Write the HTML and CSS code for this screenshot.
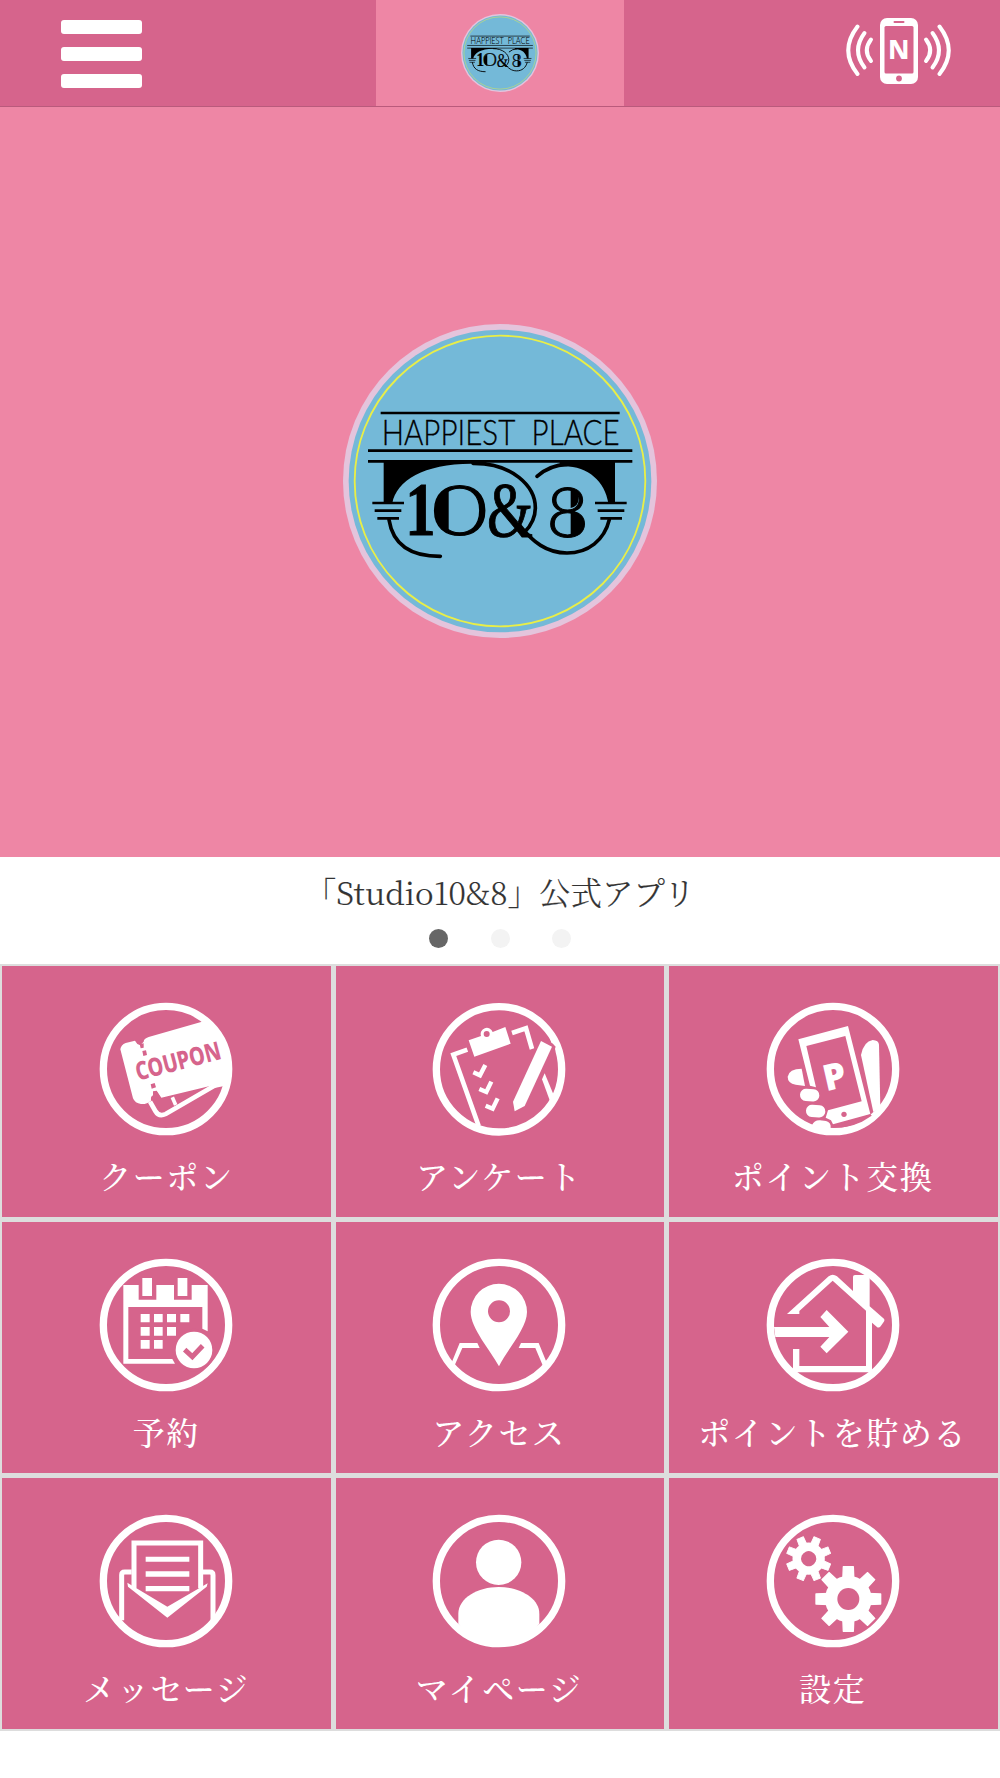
FILE: index.html
```html
<!DOCTYPE html>
<html lang="ja">

<head>
    <meta charset="UTF-8">
    <title>Studio10&amp;8</title>
    <meta name="viewport" content="width=device-width, initial-scale=1.0">
    <link rel="stylesheet" href="styles.css">
</head>

<body>
    <header class="header">
        <button class="menu-btn" type="button" aria-label="メニュー">
            <span></span>
            <span></span>
            <span></span>
        </button>
        <div class="header-logo">
            <svg class="logo-small" viewBox="40 41 942 942"><use href="#logo" /></svg>
        </div>
        <button class="nfc-btn" type="button" aria-label="NFC">
            <svg width="108" height="70" viewBox="845 16 108 70">
                <rect x="880" y="18" width="38" height="66" rx="7" fill="#fff" />
                <rect class="cut" x="884.5" y="26" width="29" height="47.500" rx="1.500" />
                <rect class="cut" x="893.500" y="21" width="11" height="2" rx="1" />
                <circle class="cut" cx="899" cy="78.500" r="2.900" />
                <text class="nfc-text" x="888" y="59" textLength="21.500" lengthAdjust="spacingAndGlyphs">N</text>
                <g id="waves" fill="none" stroke="#fff" stroke-width="4" stroke-linecap="round">
                    <path d="M926 39.500Q934.500 50.500 926 61" />
                    <path d="M932.500 33Q945.500 50.500 932.500 67.500" />
                    <path d="M939.500 26.500Q958 50.500 939.500 74" />
                </g>
                <use href="#waves" transform="translate(1797 0) scale(-1 1)" />
            </svg>
        </button>
    </header>

    <main>
        <section class="hero">
            <svg class="logo" viewBox="40 41 942 942">
                <g id="logo">
                    <circle cx="511" cy="512" r="471" fill="#e4c4dc" />
                    <circle cx="511" cy="512" r="454" fill="#74b9d8" />
                    <circle class="logo-ring" cx="511" cy="512" r="436" />
                    <g fill="none" stroke="#000" stroke-width="8">
                        <path d="M153 308H870M115 421H908M115 453H908" />
                        <path d="M128 578H223M135 601H215M143 624H208M796 578H891M804 601H884M812 624H877" />
                    </g>
                    <text class="logo-name" x="156" y="403" textLength="714" lengthAdjust="spacingAndGlyphs">HAPPIEST PLACE</text>
                    <!-- pillars and arches -->
                    <path d="M162 453H470V462C300 450 202 505 188 578H162Z" />
                    <path d="M690 453H856V578H836C825 510 770 462 690 468Z" />
                    <!-- swirls -->
                    <g fill="none" stroke="#000" stroke-width="11" stroke-linecap="round">
                        <path d="M430 459C548 458 617 528 617 592C617 622 606 644 585 665" />
                        <path d="M622 498Q660 464 712 462" />
                        <path d="M178 628C190 705 245 738 332 738" />
                        <path d="M570 645C610 695 650 728 712 728C775 728 824 690 839 628" />
                    </g>
                    <text class="logo-num one" x="227" y="674" textLength="91" lengthAdjust="spacingAndGlyphs">1</text>
                    <path d="M357 531Q318 550 318 599T357 667Z" />
                    <text class="logo-num" x="304" y="673" textLength="172" lengthAdjust="spacingAndGlyphs">0</text>
                    <text class="logo-num amp" x="472" y="678" textLength="138" lengthAdjust="spacingAndGlyphs">&amp;</text>
                    <path d="M723 533Q747 538 747 563T723 593V600Q755 606 755 639T723 675Z" />
                    <text class="logo-num" x="650" y="681" textLength="128" lengthAdjust="spacingAndGlyphs">8</text>
                </g>
            </svg>
        </section>

        <section class="caption">
            <p>「Studio10&amp;8」公式アプリ</p>
            <div class="dots">
                <span class="dot active"></span>
                <span class="dot"></span>
                <span class="dot"></span>
            </div>
        </section>

        <nav class="menu">
            <a class="menu-item">
                <svg class="icon" viewBox="56 66 402 402">
                    <circle class="ring" cx="257" cy="267" r="188" />
                    <path d="M120 208Q122 194 136 189L164 182L171 192L180 196L190 185Q190 176 205 171L370 124Q440 165 450 250L432 318L243 356L229 334L222 350Q210 345 212 362Q200 373 182 372Q164 370 158 355Z" />
                    <path class="cut" d="M178 193L190 190V203L181 205ZM186 213L197 211L200 225L189 228ZM211 313L223 309L227 322L214 326ZM218 334L229 332L243 353L414 312L401 318L262 385Q246 397 237 383L218 368Q208 350 218 346Z" />
                    <path class="line" stroke-width="11" d="M276 352L286 375" />
                    <path class="line" stroke-width="14" d="M209 365L225 393Q236 412 256 402L420 307" />
                    <text class="coupon" transform="translate(173 302) rotate(-14.500)" textLength="262" lengthAdjust="spacingAndGlyphs">COUPON</text>
                </svg>
                <span class="label">クーポン</span>
            </a>
            <a class="menu-item">
                <svg class="icon" viewBox="97 66 402 402">
                    <circle class="ring" cx="298" cy="268" r="188" />
                    <path d="M207 181L244 168A18 18 0 0 1 279 156L317 141L333 191L224 230Z" />
                    <circle class="cut" cx="261" cy="162" r="9" />
                    <path class="line" stroke-width="14" d="M203 209L161 224L237 438" />
                    <path class="line" stroke-width="14" d="M337 159L379 145L397 207" />
                    <path class="line" stroke-width="13" d="M221 277L241 286L257 255M239 327L260 336L275 305M258 377L279 386L294 355" />
                    <path class="cut" d="M400 211L428 176L447 178L468 200L467 214L431 292L427 303L400 290Z" />
                    <path d="M424 183L457 200L375 378L345 394L340 365Z" />
                    <path d="M450 172L481 190L471 216L466 207L471 195L455 188Z" />
                    <path d="M435 280L463 347L452 366L427 298Z" />
                </svg>
                <span class="label">アンケート</span>
            </a>
            <a class="menu-item">
                <svg class="icon" viewBox="136 66 402 402">
                    <circle class="ring" cx="337" cy="267" r="188" />
                    <path d="M233 178L382 138L449 402L337 433L331 421L315 413L322 391L423 364L374 168L257 198L286 322L268 317Z" />
                    <circle class="cut" cx="370" cy="403" r="8" />
                    <path d="M243 266L253 318L225 314Q201 310 201 290Q205 266 243 266Z" />
                    <rect x="238" y="327" width="58" height="37" rx="18" transform="rotate(4 267 346)" />
                    <rect x="256" y="375" width="58" height="37" rx="18" transform="rotate(4 285 393)" />
                    <path d="M274 436Q281 420 298 421L316 423Q332 428 330 444L360 442V460H310Z" />
                    <path class="cut" d="M330 444L450 403L453 407L424 425Q380 445 330 444Z" />
                    <path d="M421 225Q429 184 456 180Q474 181 475 194L479 382L458 396Z" />
                    <text class="point" transform="translate(317 334) rotate(-13)">P</text>
                </svg>
                <span class="label">ポイント交換</span>
            </a>
            <a class="menu-item">
                <svg class="icon" viewBox="56 54 402 402">
                    <circle class="ring" cx="257" cy="255" r="188" />
                    <path d="M129 135H175V179H228V135H281V179H334V135H382V274L366 266V201H144V357H276L284 371H129Z" />
                    <path d="M186 114H215V168H186ZM292 114H321V168H292Z" />
                    <path d="M181 222H208V247H181ZM221 222H247V247H221ZM260 222H287V247H260ZM300 222H327V247H300ZM181 261H208V287H181ZM221 261H247V287H221ZM260 261H287V287H260ZM181 300H208V326H181ZM221 300H247V326H221Z" />
                    <circle class="cut" cx="341" cy="330" r="64" />
                    <circle cx="341" cy="330" r="55" />
                    <path fill="none" stroke="#d6648c" stroke-width="15" d="M313 329L336 350L367 317" />
                </svg>
                <span class="label">予約</span>
            </a>
            <a class="menu-item">
                <svg class="icon" viewBox="95 54 402 402">
                    <circle class="ring" cx="296" cy="255" r="188" />
                    <path fill-rule="evenodd" d="M296 379C270 330 211 265 211 216A84.500 84.500 0 0 1 380 216C380 265 320 330 296 379ZM296 181A33 33 0 1 0 296 247A33 33 0 1 0 296 181Z" />
                    <path d="M155 365L178 309H231L238 324H186L162 378ZM438 365L415 309H362L355 324H405L428 378Z" />
                </svg>
                <span class="label">アクセス</span>
            </a>
            <a class="menu-item">
                <svg class="icon" viewBox="226 54 402 402">
                    <circle class="ring" cx="427" cy="255" r="188" />
                    <path d="M289 222L414 109Q426 99 439 109L487 153V110Q487 105 493 105H530L537 116V199L578 235Q584 240 579 246L570 259Q564 266 558 260L544 248V397H307V327H326V378H526V212L426 122L326 213V222Z" />
                    <path d="M250 261H416L389 231L408 210L473 275L408 340L389 320L416 291H254Z" />
                </svg>
                <span class="label">ポイントを貯める</span>
            </a>
            <a class="menu-item">
                <svg class="icon" viewBox="86 73 402 402">
                    <circle class="ring" cx="287" cy="274" r="188" />
                    <path class="line" stroke-width="15" d="M191 296V160H391V296" />
                    <path class="line" stroke-width="15" d="M184 247H163Q154 247 154 256V392M398 247H419Q428 247 428 256V392" />
                    <path d="M226 201H357V216H226ZM226 245H357V261H226ZM226 289H357V305H226Z" />
                    <path d="M171 279L291 351L412 281L409 291L291 384L173 291Z" />
                </svg>
                <span class="label">メッセージ</span>
            </a>
            <a class="menu-item">
                <svg class="icon" viewBox="97 73 402 402">
                    <circle class="ring" cx="298" cy="274" r="188" />
                    <circle cx="297" cy="218" r="68" />
                    <path d="M176 402V372C176 325 235 292 297 292C360 292 419 325 419 372V402Q370 468 298 468T176 402Z" />
                </svg>
                <span class="label">マイページ</span>
            </a>
            <a class="menu-item">
                <svg class="icon" viewBox="76 72 402 402">
                    <circle class="ring" cx="277" cy="273" r="188" />
                    <g id="gear" transform="translate(323 327)">
                        <g stroke="#fff" stroke-width="4" stroke-linejoin="round">
                            <path id="tooth" d="M-15-97H15L19 0L15 97H-15L-19 0Z" />
                            <use href="#tooth" transform="rotate(45)" />
                            <use href="#tooth" transform="rotate(90)" />
                            <use href="#tooth" transform="rotate(135)" />
                        </g>
                        <circle r="70" />
                        <circle class="cut" r="33" />
                    </g>
                    <use href="#gear" transform="translate(204 206) scale(.69) rotate(22.500) translate(-323 -327)" />
                </svg>
                <span class="label">設定</span>
            </a>
        </nav>
    </main>
</body>

</html>
```
FILE: styles.css
```css
* {
    margin: 0;
    padding: 0;
    box-sizing: border-box;
}

body {
    background: #fff;
    font-family: "Noto Serif CJK JP", "Liberation Serif", "Noto Sans CJK JP", serif;
    color: #333;
}

button {
    background: none;
    border: none;
}

.header {
    display: grid;
    grid-template-columns: 376px 248px 376px;
    height: 107px;
    background: #d6648c;
    border-bottom: 1px solid #b95a7c;
}

.menu-btn {
    display: flex;
    flex-direction: column;
    gap: 13px;
    padding: 20px 0 0 61px;
}

.menu-btn span {
    width: 81px;
    height: 14px;
    border-radius: 3px;
    background: #fff;
}

.header-logo {
    display: flex;
    align-items: center;
    justify-content: center;
    background: #ee86a5;
}

.logo-small {
    width: 78px;
    height: 78px;
}

.nfc-btn {
    display: flex;
    justify-content: flex-end;
    padding: 16px 47px 0 0;
}

.cut {
    fill: #d6648c;
}

.nfc-text {
    fill: #fff;
    font: 800 26px "Noto Sans", sans-serif;
}

.hero {
    display: flex;
    align-items: center;
    justify-content: center;
    height: 750px;
    padding-bottom: 2px;
    background: #ee86a5;
}

.logo {
    width: 314px;
    height: 314px;
}

.logo-ring {
    fill: none;
    stroke: #e9ee47;
    stroke-width: 5.5;
}

.logo-name {
    font: 300 109px Lato, sans-serif;
    word-spacing: 34px;
    stroke: #000;
    stroke-width: 1;
}

.logo-num {
    font: 300 208px Lato, sans-serif;
    stroke: #000;
    stroke-width: 3;
}

.logo-num.one {
    font: bold 227px "Liberation Serif", serif;
}

.logo-num.amp {
    font: 235px "Liberation Serif", serif;
}

.caption {
    height: 107px;
    padding-top: 11px;
    text-align: center;
}

.caption p {
    font-size: 31.5px;
    font-weight: 300;
    line-height: 48px;
    -webkit-text-stroke: 0.2px #333;
}

.dots {
    display: flex;
    justify-content: center;
    gap: 42.5px;
    padding-top: 13px;
}

.dot {
    width: 19px;
    height: 19px;
    border-radius: 50%;
    background: #f3f3f3;
}

.dot.active {
    background: #666;
}

.menu {
    display: grid;
    grid-template-columns: repeat(3, 1fr);
    grid-template-rows: repeat(3, 251px);
    gap: 5px;
    padding: 2px;
    background: #ddd;
}

.menu-item {
    display: flex;
    flex-direction: column;
    align-items: center;
    padding: 36px 2px 0 0;
    background: #d6648c;
    color: #fff;
}

.menu-item:nth-child(3n + 1) {
    padding-right: 0;
}

.icon {
    width: 134px;
    height: 134px;
    fill: #fff;
}

.ring {
    fill: none;
    stroke: #fff;
    stroke-width: 22;
}

.line {
    fill: none;
    stroke: #fff;
}

.coupon {
    fill: #d6648c;
    font: 800 76px "Noto Sans", sans-serif;
}

.point {
    font: 800 108px "Open Sans", sans-serif;
}

.label {
    margin-top: 15px;
    font-size: 32px;
    font-weight: 500;
    line-height: 48px;
    letter-spacing: 1.6px;
    white-space: nowrap;
}
```
